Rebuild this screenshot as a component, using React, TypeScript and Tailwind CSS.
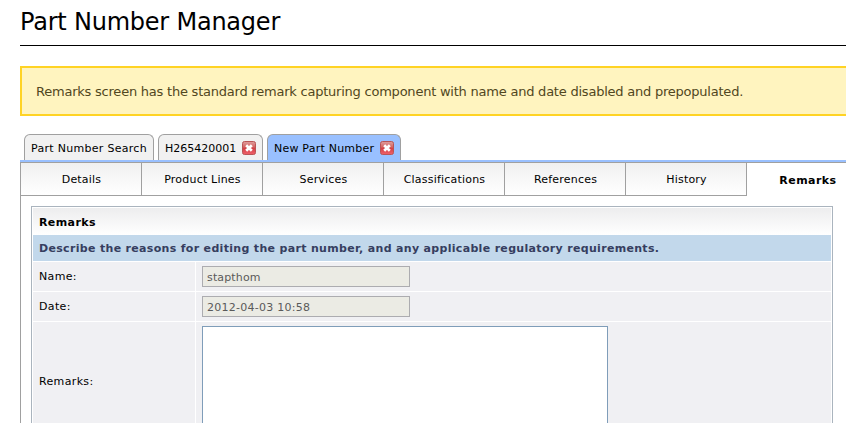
import type { ReactNode } from "react";

const sections = ["Details", "Product Lines", "Services", "Classifications", "References", "History"];

function CloseIcon() {
  return (
    <svg width="14" height="14" viewBox="0 0 14 14" className="relative -top-px block shrink-0">
      <defs>
        <linearGradient id="closeFill" x1="0" y1="0" x2="0" y2="1">
          <stop offset="0" stopColor="#dfa09f" />
          <stop offset="0.45" stopColor="#d3605f" />
          <stop offset="0.5" stopColor="#d23f45" />
          <stop offset="1" stopColor="#f0606a" />
        </linearGradient>
      </defs>
      <rect x="0.5" y="0.5" width="13" height="13" rx="2" fill="url(#closeFill)" stroke="#b95455" />
      <path d="M4.2 4.2 L9.8 9.8 M9.8 4.2 L4.2 9.8" stroke="#fff" strokeWidth="2.7" />
    </svg>
  );
}

function Tab({ className, children }: { className: string; children: ReactNode }) {
  return (
    <div className={`flex h-[26px] shrink-0 items-center rounded-t-[6px] border border-b-0 border-[#a0a0a0] pl-1.5 pt-[3px] ${className}`}>
      {children}
    </div>
  );
}

function Row({ label, className, children }: { label: string; className: string; children: ReactNode }) {
  return (
    <div className={`flex gap-px ${className}`}>
      <div className="flex w-[162px] shrink-0 items-center bg-[#f0f0f3] pt-px pl-1.5 tracking-[0.35px]">{label}</div>
      <div className="flex-1 bg-[#f0f0f3] pl-1.5 pt-1">{children}</div>
    </div>
  );
}

export default function App() {
  return (
    <div className="h-[423px] w-[846px] overflow-hidden bg-white pl-5 font-['DejaVu_Sans',sans-serif] text-[11px] whitespace-nowrap text-black">
      <h1 className="h-[46px] border-b border-black pt-[6px] text-[24px] leading-[32px] tracking-[-0.22px]">Part Number Manager</h1>

      <div className="mt-5 flex h-[50px] w-[840px] items-center border-2 border-[#ffd324] bg-[#fff4bf] pt-0.5 pl-3.5 text-[13px] tracking-[-0.225px] text-[#514721]">
        Remarks screen has the standard remark capturing component with name and date disabled and prepopulated.
      </div>

      <div className="mt-[18px] flex gap-1 border-b-2 border-[#99c0ff] pl-1">
        <Tab className="w-[130px] bg-[#f1f1f1] tracking-[0.29px]">Part Number Search</Tab>
        <Tab className="w-[105px] justify-between bg-[#f1f1f1] pr-1.5">
          H265420001
          <CloseIcon />
        </Tab>
        <Tab className="w-[134px] justify-between bg-[#99c0ff] pr-1.5 tracking-[0.22px]">
          New Part Number
          <CloseIcon />
        </Tab>
      </div>

      <div className="h-[261px] border-t border-l border-[#a0a0a0]">
        <div className="flex h-[33px]">
          {sections.map((name) => (
            <div
              key={name}
              className="flex w-[121px] shrink-0 items-center justify-center border-r border-b border-[#a0a0a0] bg-linear-to-b from-[#f0f0f0] to-white pt-[3px] pl-px tracking-[0.2px]"
            >
              {name}
            </div>
          ))}
          <div className="flex w-[121px] shrink-0 items-center justify-center pt-[3px] pl-px font-bold tracking-[0.45px]">Remarks</div>
        </div>

        <div className="mt-2.5 ml-2.5 h-[240px] w-[802px] border border-[#aab4be] p-px">
          <div className="flex h-[27px] items-center bg-linear-to-b from-[#ededee] to-white pl-1.5 pt-[3px] font-bold tracking-[0.4px]">Remarks</div>
          <div className="flex h-[26px] items-center bg-[#c2d8eb] pt-0.5 pl-1.5 font-bold tracking-[0.32px] text-[#363e60]">
            Describe the reasons for editing the part number, and any applicable regulatory requirements.
          </div>
          <Row label="Name:" className="mt-px h-[29px]">
            <input
              disabled
              defaultValue="stapthom"
              className="block h-[21px] w-[208px] border border-[#acacb0] bg-[#ebebe4] px-1 pt-0.5 tracking-[0.15px] text-[#5a5a5a]"
            />
          </Row>
          <Row label="Date:" className="mt-px h-[29px]">
            <input
              disabled
              defaultValue="2012-04-03 10:58"
              className="block h-[21px] w-[208px] border border-[#acacb0] bg-[#ebebe4] px-1 pt-0.5 tracking-[0.25px] text-[#5a5a5a]"
            />
          </Row>
          <Row label="Remarks:" className="mt-px h-[120px]">
            <textarea className="block h-[112px] w-[406px] resize-none border border-[#7f9db9] bg-white" />
          </Row>
        </div>
      </div>
    </div>
  );
}
